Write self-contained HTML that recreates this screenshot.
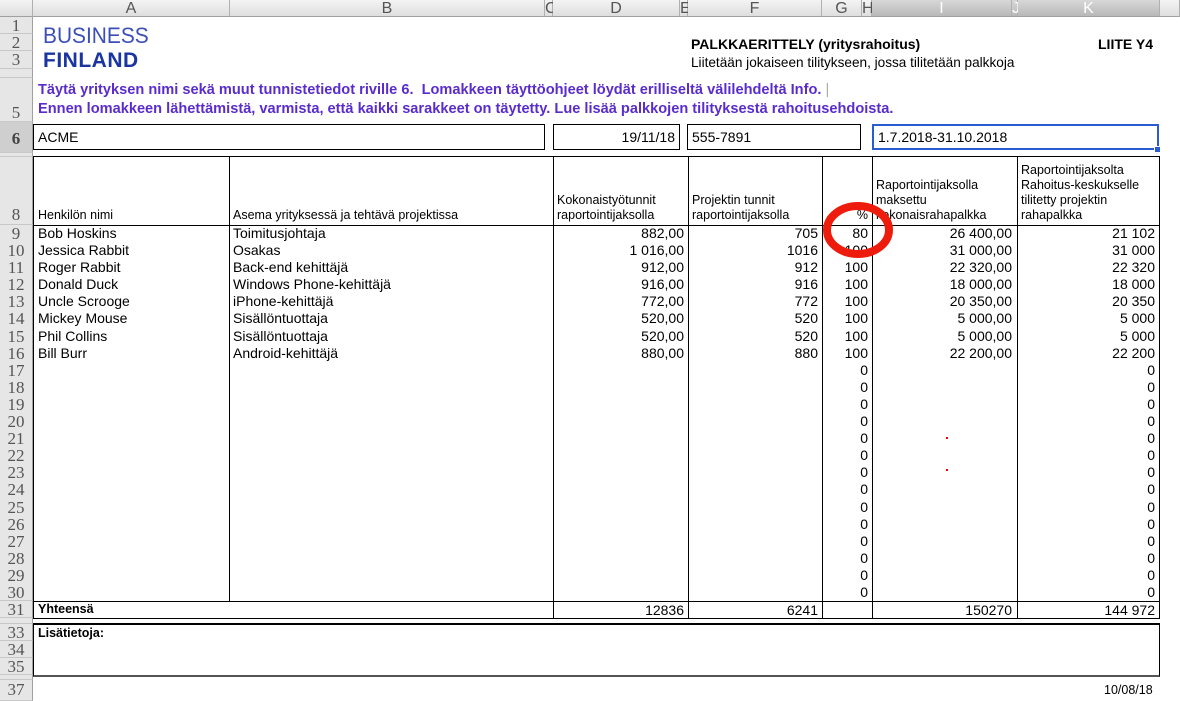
<!DOCTYPE html>
<html><head><meta charset="utf-8"><style>
*{margin:0;padding:0;box-sizing:border-box}
body{width:1180px;height:701px;overflow:hidden;background:#fff;font-family:"Liberation Sans",Arial,sans-serif;font-size:14px;color:#000;position:relative}
.a{position:absolute}
.ch{position:absolute;top:0;height:17px;background:linear-gradient(#f4f4f4,#dedede);border-right:1px solid #b0b0b0;border-bottom:1px solid #a0a0a0;text-align:center;font-size:16px;color:#555;line-height:17px}
.rh{position:absolute;left:0;width:33px;background:#e6e6e6;border-right:1px solid #a0a0a0;border-bottom:1px solid #c8c8c8;color:#555;font-family:"Liberation Serif",serif;font-size:17px;text-align:center}
.col{position:absolute;top:225px;line-height:17.1px;white-space:nowrap}
.r{text-align:right}
.vl{position:absolute;width:1px;background:#000}
.hl{position:absolute;height:1px;background:#000}
.box{position:absolute;border:1px solid #000;height:26px;line-height:24px;padding:0 4px;white-space:nowrap}
.hd{position:absolute;top:160px;height:65px;display:flex;align-items:flex-end;font-size:12.5px;line-height:15px;padding-bottom:2px}
</style></head><body>
<div class="ch" style="left:0;width:33px"></div>
<div class="ch" style="left:33px;width:197px">A</div>
<div class="ch" style="left:230px;width:315px">B</div>
<div class="ch" style="left:545px;width:8px">C</div>
<div class="ch" style="left:553px;width:127px">D</div>
<div class="ch" style="left:680px;width:8px">E</div>
<div class="ch" style="left:688px;width:134px">F</div>
<div class="ch" style="left:822px;width:40px">G</div>
<div class="ch" style="left:862px;width:10px">H</div>
<div class="ch" style="left:872px;width:140px;background:linear-gradient(#d8d8d8,#b8b8b8);color:#fff">I</div>
<div class="ch" style="left:1012px;width:6px;background:linear-gradient(#d8d8d8,#b8b8b8);color:#fff">J</div>
<div class="ch" style="left:1018px;width:142px;background:linear-gradient(#d8d8d8,#b8b8b8);color:#fff">K</div>
<div class="ch" style="left:1160px;width:20px"></div>
<div class="rh" style="top:17px;height:17px;line-height:17px">1</div>
<div class="rh" style="top:34px;height:17px;line-height:17px">2</div>
<div class="rh" style="top:51px;height:18px;line-height:18px">3</div>
<div class="rh" style="top:69px;height:9px"></div>
<div class="rh" style="top:78px;height:44px;line-height:70px">5</div>
<div class="rh" style="top:122px;height:31px;line-height:34px;background:#cfcfcf;font-weight:bold;color:#444">6</div>
<div class="rh" style="top:153px;height:4px"></div>
<div class="rh" style="top:157px;height:68px;line-height:115px">8</div>
<div class="rh" style="top:225px;height:376px;line-height:17.1px;border-bottom:1px solid #c8c8c8">9<br>10<br>11<br>12<br>13<br>14<br>15<br>16<br>17<br>18<br>19<br>20<br>21<br>22<br>23<br>24<br>25<br>26<br>27<br>28<br>29<br>30</div>
<div class="rh" style="top:601px;height:17px;line-height:17px">31</div>
<div class="rh" style="top:618px;height:6px"></div>
<div class="rh" style="top:624px;height:17px;line-height:17px">33</div>
<div class="rh" style="top:641px;height:17px;line-height:17px">34</div>
<div class="rh" style="top:658px;height:17px;line-height:17px">35</div>
<div class="rh" style="top:675px;height:5px"></div>
<div class="rh" style="top:680px;height:21px;line-height:19px">37</div>

<div class="a" style="left:43px;top:24px;font-size:22px;color:#3a4fb8;line-height:24px;transform:scaleX(0.95);transform-origin:left">BUSINESS</div>
<div class="a" style="left:43px;top:49px;font-size:21px;font-weight:bold;color:#1a34a0;line-height:24px;letter-spacing:0.5px">FINLAND</div>

<div class="a" style="left:691px;top:36px;font-weight:bold">PALKKAERITTELY (yritysrahoitus)</div>
<div class="a" style="left:1098px;top:36px;font-weight:bold">LIITE Y4</div>
<div class="a" style="left:691px;top:55px;font-size:13.6px">Liitetään jokaiseen tilitykseen, jossa tilitetään palkkoja</div>
<div class="a" style="left:38px;top:82px;font-size:14.6px;font-weight:bold;color:#5a2ccc;white-space:nowrap">Täytä yrityksen nimi sekä muut tunnistetiedot riville 6.&nbsp; Lomakkeen täyttöohjeet löydät erilliseltä välilehdeltä Info. <span style="color:#aaa;font-weight:normal">|</span></div>
<div class="a" style="left:38px;top:101px;font-size:14.6px;font-weight:bold;color:#5a2ccc;white-space:nowrap">Ennen lomakkeen lähettämistä, varmista, että kaikki sarakkeet on täytetty. Lue lisää palkkojen tilityksestä rahoitusehdoista.</div>

<div class="box" style="left:33px;top:124px;width:512px">ACME</div>
<div class="box" style="left:553px;top:124px;width:127px;text-align:right">19/11/18</div>
<div class="box" style="left:687px;top:124px;width:174px">555-7891</div>
<div class="box" style="left:872px;top:124px;width:287px;border:2px solid #2a5bd0;line-height:22px">1.7.2018-31.10.2018</div>
<div class="a" style="left:1154px;top:146px;width:7px;height:7px;background:#2a5bd0;border:1px solid #fff"></div>

<div class="hl" style="left:33px;top:156px;width:1127px"></div>
<div class="hl" style="left:33px;top:225px;width:1127px"></div>
<div class="hl" style="left:33px;top:601px;width:1127px"></div>
<div class="hl" style="left:33px;top:618px;width:1127px"></div>
<div class="vl" style="left:33px;top:156px;height:463px"></div>
<div class="vl" style="left:229px;top:156px;height:446px"></div>
<div class="vl" style="left:553px;top:156px;height:463px"></div>
<div class="vl" style="left:688px;top:156px;height:463px"></div>
<div class="vl" style="left:822px;top:156px;height:463px"></div>
<div class="vl" style="left:872px;top:156px;height:463px"></div>
<div class="vl" style="left:1017px;top:156px;height:463px"></div>
<div class="vl" style="left:1159px;top:156px;height:463px"></div>

<div class="hd" style="left:38px">Henkilön nimi</div>
<div class="hd" style="left:233px">Asema yrityksessä ja tehtävä projektissa</div>
<div class="hd" style="left:557px">Kokonaistyötunnit<br>raportointijaksolla</div>
<div class="hd" style="left:692px">Projektin tunnit<br>raportointijaksolla</div>
<div class="hd" style="left:822px;width:46px;justify-content:flex-end">%</div>
<div class="hd" style="left:876px">Raportointijaksolla<br>maksettu<br>kokonaisrahapalkka</div>
<div class="hd" style="left:1021px">Raportointijaksolta<br>Rahoitus-keskukselle<br>tilitetty projektin<br>rahapalkka</div>

<div class="col" style="left:38px">Bob Hoskins<br>Jessica Rabbit<br>Roger Rabbit<br>Donald Duck<br>Uncle Scrooge<br>Mickey Mouse<br>Phil Collins<br>Bill Burr</div>
<div class="col" style="left:233px">Toimitusjohtaja<br>Osakas<br>Back-end kehittäjä<br>Windows Phone-kehittäjä<br>iPhone-kehittäjä<br>Sisällöntuottaja<br>Sisällöntuottaja<br>Android-kehittäjä</div>
<div class="col r" style="left:553px;width:131px">882,00<br>1 016,00<br>912,00<br>916,00<br>772,00<br>520,00<br>520,00<br>880,00</div>
<div class="col r" style="left:688px;width:130px">705<br>1016<br>912<br>916<br>772<br>520<br>520<br>880</div>
<div class="col r" style="left:822px;width:46px">80<br>100<br>100<br>100<br>100<br>100<br>100<br>100<br>0<br>0<br>0<br>0<br>0<br>0<br>0<br>0<br>0<br>0<br>0<br>0<br>0<br>0</div>
<div class="col r" style="left:872px;width:140px">26 400,00<br>31 000,00<br>22 320,00<br>18 000,00<br>20 350,00<br>5 000,00<br>5 000,00<br>22 200,00</div>
<div class="col r" style="left:1018px;width:137px">21 102<br>31 000<br>22 320<br>18 000<br>20 350<br>5 000<br>5 000<br>22 200<br>0<br>0<br>0<br>0<br>0<br>0<br>0<br>0<br>0<br>0<br>0<br>0<br>0<br>0</div>

<div class="a" style="left:38px;top:602px;font-size:12.5px;font-weight:bold">Yhteensä</div>
<div class="a r" style="left:553px;top:602px;width:131px">12836</div>
<div class="a r" style="left:688px;top:602px;width:130px">6241</div>
<div class="a r" style="left:872px;top:602px;width:140px">150270</div>
<div class="a r" style="left:1018px;top:602px;width:137px">144 972</div>

<div class="a" style="left:33px;top:623px;width:1127px;height:54px;border:1px solid #000;border-top:2px solid #000;border-bottom:2px solid #555"></div>
<div class="a" style="left:38px;top:626px;font-size:12.5px;font-weight:bold">Lisätietoja:</div>
<div class="a" style="left:1104px;top:683px;font-size:12.5px">10/08/18</div>

<div class="a" style="left:946px;top:437px;width:2px;height:2px;background:#e00"></div>
<div class="a" style="left:946px;top:469px;width:2px;height:2px;background:#e00"></div>

<svg class="a" style="left:0;top:0" width="1180" height="701"><ellipse cx="858" cy="230" rx="31" ry="24" fill="none" stroke="#ee1c0c" stroke-width="8"/></svg>
</body></html>
